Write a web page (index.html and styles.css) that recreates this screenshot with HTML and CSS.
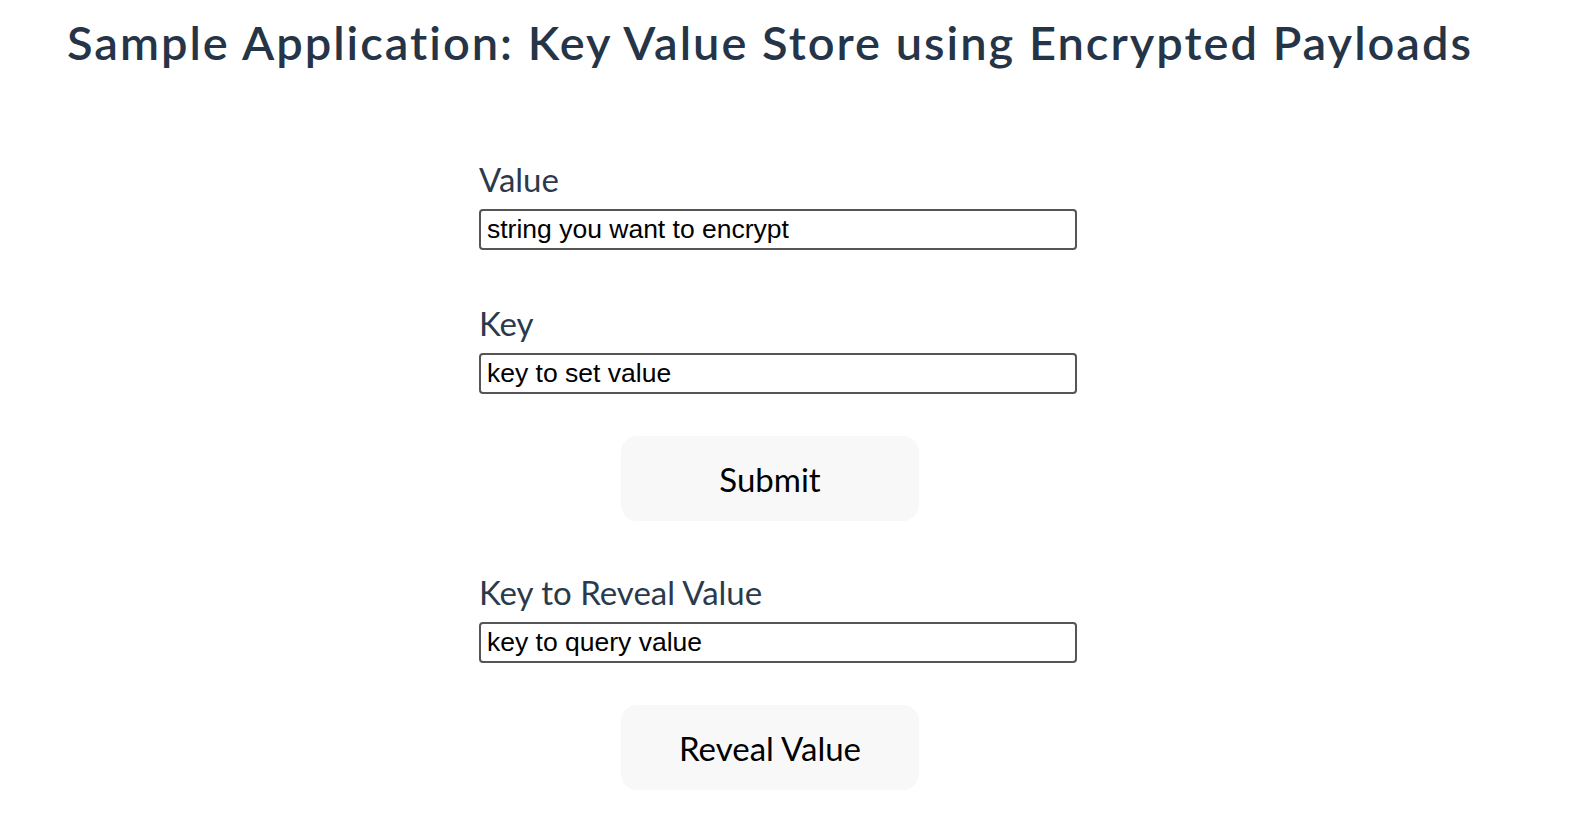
FILE: index.html
```html
<!DOCTYPE html>
<html>
<head>
<meta charset="utf-8">
<link rel="stylesheet" href="styles.css">
</head>
<body>
<div class="page">
  <h1 class="title">Sample Application: Key Value Store using Encrypted Payloads</h1>
  <form class="form">
    <div class="field">
      <label class="label">Value</label>
      <input class="input" type="text" value="string you want to encrypt">
    </div>
    <div class="field">
      <label class="label">Key</label>
      <input class="input" type="text" value="key to set value">
    </div>
    <div class="btn-row"><button type="button" class="btn">Submit</button></div>
    <div class="field">
      <label class="label">Key to Reveal Value</label>
      <input class="input" type="text" value="key to query value">
    </div>
    <div class="btn-row"><button type="button" class="btn">Reveal Value</button></div>
  </form>
</div>
</body>
</html>
```

FILE: styles.css
```css
html, body {
  margin: 0;
  padding: 0;
  background: #ffffff;
}
.page {
  width: 1540px;
  display: flex;
  flex-direction: column;
  align-items: center;
  font-family: "Lato", "Noto Sans", sans-serif;
}
.title {
  margin: 12px 0 0 0;
  font-size: 47px;
  line-height: 60px;
  font-weight: 600;
  letter-spacing: 2px;
  color: #253547;
  white-space: nowrap;
}
.form {
  width: 582px;
  margin-top: 87px;
  display: flex;
  flex-direction: column;
}
.field {
  display: flex;
  flex-direction: column;
  margin-bottom: 42px;
}
.field + .field {
  margin-top: 11px;
}
.label {
  font-size: 33px;
  line-height: 40px;
  font-weight: 400;
  color: #2a3a4c;
  margin-bottom: 10px;
}
.input {
  box-sizing: content-box;
  width: 100%;
  height: 37px;
  padding: 0 6px;
  margin: 0;
  border: 2px solid #555555;
  border-radius: 4px;
  font-family: "Liberation Sans", Arial, sans-serif;
  font-size: 26.5px;
  color: #000000;
  background: #ffffff;
  outline: none;
}
.btn-row {
  display: flex;
  justify-content: center;
  margin-bottom: 51px;
}
.btn {
  width: 298px;
  height: 85px;
  border: none;
  border-radius: 16px;
  background: #f8f8f8;
  font-family: "Lato", "Noto Sans", sans-serif;
  font-size: 33px;
  font-weight: 400;
  color: #000000;
  cursor: pointer;
}
```
